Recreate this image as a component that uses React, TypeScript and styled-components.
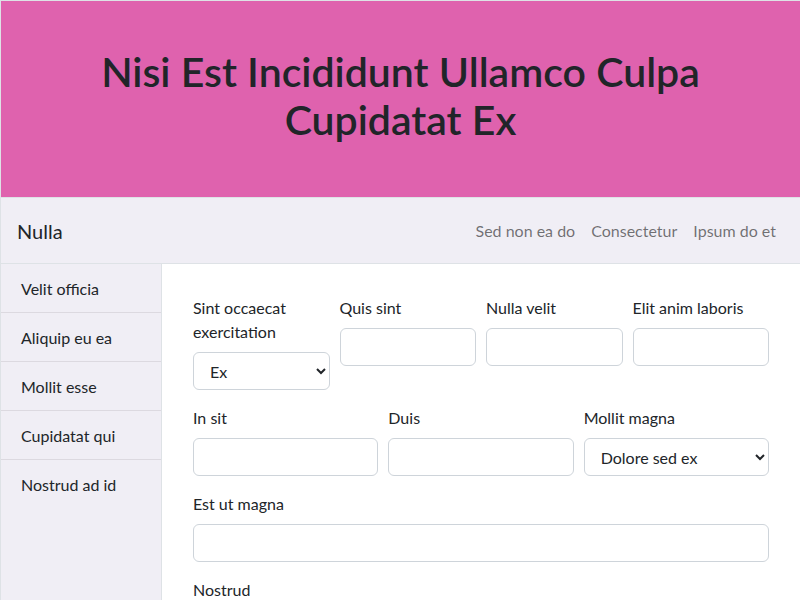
import React from "react";
import styled, { createGlobalStyle } from "styled-components";

const Global = createGlobalStyle`
  * { box-sizing: border-box; }
  html, body { margin: 0; padding: 0; }
  body {
    font-family: Lato, "Liberation Sans", Arial, sans-serif;
    font-size: 16px;
    line-height: 1.5;
    color: #212529;
    background: #fff;
  }
`;

const Page = styled.div`
  width: 800px;
  height: 600px;
  overflow: hidden;
  display: flex;
  flex-direction: column;
  border-left: 1px solid #dee2e6;
`;

const Hero = styled.header`
  background: #df62ae;
  border-top: 1px solid #dee2e6;
  border-bottom: 1px solid #dee2e6;
  padding: 47px 32px 53px;
  text-align: center;
`;

const Title = styled.h1`
  margin: 0;
  font-size: 41px;
  font-weight: 600;
  line-height: 48px;
  color: #212529;
`;

const NavBar = styled.nav`
  background: #f0eef5;
  border-bottom: 1px solid #dee2e6;
  padding: 12px 16px;
  display: flex;
  align-items: center;
  justify-content: space-between;
  height: 66px;
`;

const Brand = styled.a`
  font-size: 20px;
  line-height: 30px;
  color: #212529;
  text-decoration: none;
`;

const NavLinks = styled.div`
  display: flex;
`;

const NavLink = styled.a`
  padding: 8px;
  color: rgba(0, 0, 0, 0.55);
  text-decoration: none;
`;

const Body = styled.div`
  flex: 1;
  display: flex;
  min-height: 0;
`;

const Sidebar = styled.aside`
  width: 161px;
  flex-shrink: 0;
  background: #f0eef5;
  border-right: 1px solid #dee2e6;
  display: flex;
  flex-direction: column;
`;

const SideItem = styled.a<{ $last?: boolean }>`
  padding: 13px 20px 11px;
  line-height: 24px;
  color: #212529;
  text-decoration: none;
  border-bottom: ${(p) => (p.$last ? "none" : "1px solid #dcd9e0")};
`;

const Main = styled.main`
  flex: 1;
  padding: 32px 31px;
  display: flex;
  flex-direction: column;
  gap: 16px;
`;

const Row = styled.div<{ $cols: number }>`
  display: grid;
  grid-template-columns: repeat(${(p) => p.$cols}, 1fr);
  column-gap: 10px;
  align-items: start;
`;

const Field = styled.div`
  display: flex;
  flex-direction: column;
`;

const Label = styled.label`
  margin-bottom: 8px;
  line-height: 24px;
`;

const Input = styled.input`
  height: 38px;
  width: 100%;
  border: 1px solid #ced4da;
  border-radius: 6px;
  padding: 6px 12px;
  font: inherit;
  background: #fff;
`;

const Select = styled.select`
  height: 38px;
  width: 100%;
  border: 1px solid #ced4da;
  border-radius: 6px;
  padding: 6px 12px;
  font: inherit;
  color: #212529;
  background: #fff;
`;

export default function App() {
  return (
    <>
      <Global />
      <Page>
        <Hero>
          <Title>Nisi Est Incididunt Ullamco Culpa Cupidatat Ex</Title>
        </Hero>
        <NavBar>
          <Brand href="#">Nulla</Brand>
          <NavLinks>
            <NavLink href="#">Sed non ea do</NavLink>
            <NavLink href="#">Consectetur</NavLink>
            <NavLink href="#">Ipsum do et</NavLink>
          </NavLinks>
        </NavBar>
        <Body>
          <Sidebar>
            <SideItem href="#">Velit officia</SideItem>
            <SideItem href="#">Aliquip eu ea</SideItem>
            <SideItem href="#">Mollit esse</SideItem>
            <SideItem href="#">Cupidatat qui</SideItem>
            <SideItem href="#" $last>Nostrud ad id</SideItem>
          </Sidebar>
          <Main>
            <Row $cols={4}>
              <Field>
                <Label>Sint occaecat exercitation</Label>
                <Select defaultValue="Ex">
                  <option>Ex</option>
                </Select>
              </Field>
              <Field>
                <Label>Quis sint</Label>
                <Input />
              </Field>
              <Field>
                <Label>Nulla velit</Label>
                <Input />
              </Field>
              <Field>
                <Label>Elit anim laboris</Label>
                <Input />
              </Field>
            </Row>
            <Row $cols={3}>
              <Field>
                <Label>In sit</Label>
                <Input />
              </Field>
              <Field>
                <Label>Duis</Label>
                <Input />
              </Field>
              <Field>
                <Label>Mollit magna</Label>
                <Select defaultValue="Dolore sed ex">
                  <option>Dolore sed ex</option>
                </Select>
              </Field>
            </Row>
            <Row $cols={1}>
              <Field>
                <Label>Est ut magna</Label>
                <Input />
              </Field>
            </Row>
            <Row $cols={1}>
              <Field>
                <Label>Nostrud</Label>
                <Input />
              </Field>
            </Row>
          </Main>
        </Body>
      </Page>
    </>
  );
}
